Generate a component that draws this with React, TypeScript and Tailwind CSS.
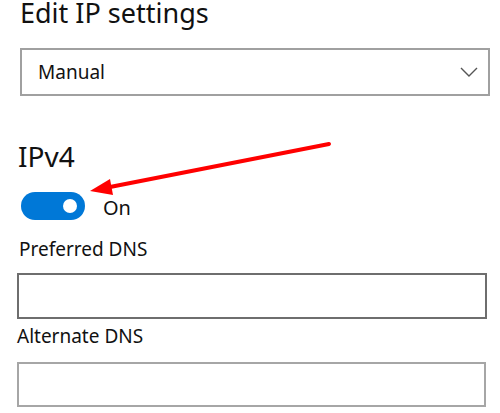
import React from "react"

function Chevron() {
  return (
    <svg width="18" height="10" viewBox="0 0 18 10" fill="none">
      <path d="M1 1l8 8 8-8" stroke="#555" strokeWidth="1.4" />
    </svg>
  )
}

function Arrow() {
  // red annotation pointing at the toggle
  return (
    <svg
      className="absolute left-0 top-0 pointer-events-none"
      width="500"
      height="413"
      viewBox="0 0 500 413"
    >
      <line x1="110" y1="187" x2="329" y2="144" stroke="#ff0000" strokeWidth="4" strokeLinecap="round" />
      <polygon points="90,191 113,195 110,179" fill="#ff0000" />
    </svg>
  )
}

export default function App() {
  return (
    <div className="relative w-[500px] h-[413px] overflow-hidden bg-white text-[#111] font-['Noto_Sans',sans-serif]">
      <h1 className="pl-[20px] h-[25px] text-[27px] leading-[25px] font-normal">Edit IP settings</h1>

      <div className="mt-[23px] ml-[20px] w-[470px] h-[48px] border-2 border-[#a0a0a0] flex items-center justify-between pl-[16px] pr-[10px]">
        <span className="text-[19px] leading-[44px]">Manual</span>
        <Chevron />
      </div>

      <h2 className="mt-[44px] pl-[18px] h-[34px] text-[28px] leading-[33px] font-normal">IPv4</h2>

      <div className="mt-[18px] ml-[21px] flex items-start h-[28px]">
        <div className="w-[64px] h-[28px] rounded-full bg-[#0078d7] flex items-center justify-end pr-[8px]">
          <div className="w-[14px] h-[14px] rounded-full bg-white" />
        </div>
        <span className="ml-[18px] pt-[4px] text-[20px] leading-[24px]">On</span>
      </div>

      <div className="mt-[16px] pl-[19px] h-[26px] text-[19px] leading-[27px]">Preferred DNS</div>
      <div className="mt-[11px] ml-[17px] w-[470px] h-[46px] border-2 border-[#6e6e6e]" />

      <div className="mt-[4px] pl-[17px] h-[26px] text-[19px] leading-[27px]">Alternate DNS</div>
      <div className="mt-[13px] ml-[17px] w-[469px] h-[45px] border-2 border-[#a6a6a6]" />

      <Arrow />
    </div>
  )
}
